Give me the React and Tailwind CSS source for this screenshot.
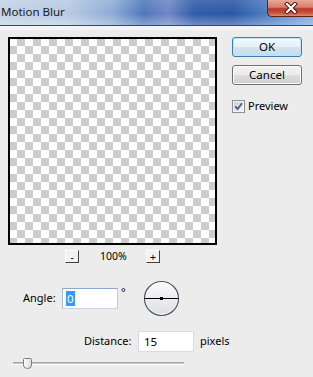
export default function App() {
  return (
    <div className="w-[313px] h-[377px] overflow-hidden bg-[#ececec] font-['Noto_Sans',sans-serif] text-[11px] text-black">
      {/* Title bar */}
      <div className="h-[25px] flex items-start justify-between [background:linear-gradient(to_bottom,rgba(255,255,255,0.12),rgba(255,255,255,0)_55%,rgba(255,255,255,0.3)),linear-gradient(to_right,#c3d3e7_0%,#b7cae2_22%,#8eabd6_36%,#4f78bb_46%,#6f86c6_54%,#2f5ca9_62%,#2a57a5_74%,#4f7fc4_86%,#86a9dc_100%)]">
        <span className="pl-[1px] pt-[4px] text-[11.5px] leading-[16px] text-[#1a1a1a]">Motion Blur</span>
        <div className="w-[46px] h-[17px] rounded-bl-[5px] border-l border-b border-[#5a2419] flex items-center justify-center [background:linear-gradient(to_bottom,#e9a99a_0%,#d97c68_45%,#b8392a_55%,#c9513c_80%,#e08a6c_100%)]">
          <svg width="14" height="12" viewBox="0 0 14 12">
            <path d="M3 2 L11 10 M11 2 L3 10" stroke="#3a1510" strokeWidth="4" strokeLinecap="square" />
            <path d="M3 2 L11 10 M11 2 L3 10" stroke="#ffffff" strokeWidth="2.2" strokeLinecap="square" />
          </svg>
        </div>
      </div>
      <div className="h-px bg-[#34476a]" />
      <div className="h-[4px] bg-[#f4f4f4]" />

      {/* Main row */}
      <div className="flex items-start">
        <div className="ml-[8px] mt-[7px] flex flex-col">
          <div className="w-[209px] h-[208px] border-2 border-black [background-image:conic-gradient(#cccccc_25%,#ffffff_0_50%,#cccccc_0_75%,#ffffff_0)] [background-size:16px_16px] [background-position:-1px_-1px]" />
          <div className="mt-[5px] h-[13px] flex justify-center items-center gap-[21px]">
            <div className="w-[14px] h-[13px] bg-[#f2f2f2] border border-t-white border-l-white border-r-[#404040] border-b-[#404040] flex items-center justify-center text-[10px] leading-none">-</div>
            <span className="text-[10.5px] leading-[13px] w-[25px] text-center">100%</span>
            <div className="w-[14px] h-[13px] bg-[#f2f2f2] border border-t-white border-l-white border-r-[#404040] border-b-[#404040] flex items-center justify-center text-[11px] leading-none">+</div>
          </div>
        </div>

        <div className="ml-[15px] mt-[7px] flex flex-col">
          <button className="w-[70px] h-[20px] rounded-[3px] border border-[#3c7fb1] shadow-[inset_0_0_0_1px_#bfe3f7] [background:linear-gradient(to_bottom,#f4f9fc_0%,#e6f0f7_50%,#d3e4f0_51%,#c8dcec_100%)] text-[11.5px] leading-none">OK</button>
          <button className="mt-[8px] w-[70px] h-[20px] rounded-[3px] border border-[#707070] shadow-[inset_0_0_0_1px_#fbfbfb] [background:linear-gradient(to_bottom,#f2f2f2_0%,#ebebeb_50%,#dddddd_51%,#cfcfcf_100%)] text-[11.5px] leading-none">Cancel</button>
          <div className="mt-[14px] flex items-center gap-[3px]">
            <svg width="13" height="13" viewBox="0 0 13 13">
              <defs>
                <linearGradient id="cb" x1="0" y1="0" x2="1" y2="1">
                  <stop offset="0" stopColor="#cbcfd5" />
                  <stop offset="1" stopColor="#f6f6f6" />
                </linearGradient>
              </defs>
              <rect x="0.5" y="0.5" width="12" height="12" fill="#f4f4f4" stroke="#8e8f8f" />
              <rect x="2" y="2" width="9" height="9" fill="url(#cb)" />
              <path d="M3.2 6.3 L5.6 9 L10 3.2" fill="none" stroke="#4a5f8c" strokeWidth="1.9" />
            </svg>
            <span className="text-[11px] leading-[14px]">Preview</span>
          </div>
        </div>
      </div>

      {/* Angle row */}
      <div className="mt-[17px] h-[36px] pl-[23px] flex items-center">
        <span className="w-[39px] text-[11px]">Angle:</span>
        <div className="w-[56px] h-[21px] bg-white border border-[#abadb3] border-t-[#8aa7cf] border-l-[#a9bbd6] border-r-[#bccbe0] border-b-[#c5d4e6] flex items-center pl-[3px]">
          <span className="bg-[#3399ff] text-white text-[11.5px] leading-[15px] px-[1px]">0</span>
        </div>
        <span className="self-start mt-[6px] ml-[3px] text-[11px] leading-none">°</span>
        <svg className="ml-[17px]" width="37" height="37" viewBox="0 0 37 37">
          <defs>
            <linearGradient id="dial" x1="0" y1="0" x2="0" y2="1">
              <stop offset="0" stopColor="#fbfbfb" />
              <stop offset="1" stopColor="#dedfe3" />
            </linearGradient>
          </defs>
          <circle cx="18.5" cy="18.5" r="17" fill="url(#dial)" stroke="#4c5463" strokeWidth="1.2" />
          <circle cx="18.5" cy="18.5" r="15.8" fill="none" stroke="#ffffff" strokeWidth="0.8" opacity="0.7" />
          <line x1="1.5" y1="18.5" x2="35.5" y2="18.5" stroke="#000" strokeWidth="1.2" />
          <rect x="17" y="17" width="3" height="3" fill="#000" />
        </svg>
      </div>

      {/* Distance row */}
      <div className="mt-[15px] h-[21px] pl-[84px] flex items-center">
        <span className="w-[54px] text-[11px]">Distance:</span>
        <div className="w-[56px] h-[21px] bg-white border border-[#dcdcdc] flex items-center pl-[5px] text-[11.5px]">15</div>
        <span className="ml-[6px] text-[11px]">pixels</span>
      </div>

      {/* Slider */}
      <div className="mt-[6px] pl-[13px]">
        <div className="relative w-[171px] h-[11px]">
          <div className="absolute left-0 right-0 top-[4px] h-[3px] bg-[#c4c4c4] border-t border-t-[#a6a6a6] border-b border-b-white" />
          <svg className="absolute left-[10px] top-0" width="9" height="11" viewBox="0 0 9 11">
            <defs>
              <linearGradient id="th" x1="0" y1="0" x2="1" y2="0">
                <stop offset="0" stopColor="#ffffff" />
                <stop offset="1" stopColor="#dcdcdc" />
              </linearGradient>
            </defs>
            <path d="M0.5 1.5 Q0.5 0.5 1.5 0.5 H7.5 Q8.5 0.5 8.5 1.5 V7 Q8.5 10.5 4.5 10.5 Q0.5 10.5 0.5 7 Z" fill="url(#th)" stroke="#7c7c7c" />
          </svg>
        </div>
      </div>
    </div>
  );
}
